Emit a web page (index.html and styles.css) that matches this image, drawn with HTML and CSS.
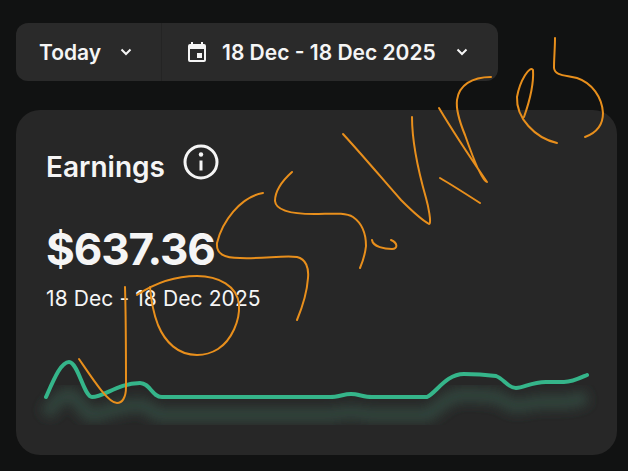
FILE: index.html
```html
<!DOCTYPE html>
<html lang="en">
<head>
    <meta charset="UTF-8">
    <meta name="viewport" content="width=device-width, initial-scale=1.0">
    <title>Earnings</title>
    <link rel="stylesheet" href="styles.css">
</head>
<body>
    <div class="toolbar">
        <button class="tool tool-range">
            <span>Today</span>
            <svg class="chev" viewBox="0 0 12 8"><path d="M1.5 1.5 6 6l4.5-4.5"/></svg>
        </button>
        <button class="tool tool-date">
            <svg class="cal" viewBox="0 0 24 24"><path d="M19 4h-1V2h-2v2H8V2H6v2H5a2 2 0 0 0-2 2v14a2 2 0 0 0 2 2h14a2 2 0 0 0 2-2V6a2 2 0 0 0-2-2zm0 16H5V9h14v11zm-7-7h5v5h-5z"/></svg>
            <span>18 Dec - 18 Dec 2025</span>
            <svg class="chev" viewBox="0 0 12 8"><path d="M1.5 1.5 6 6l4.5-4.5"/></svg>
        </button>
    </div>

    <section class="card">
        <div class="card-head">
            <h2>Earnings</h2>
            <svg class="info" viewBox="0 0 36 36">
                <circle cx="18" cy="18" r="16"/>
                <path d="M18 16.5v10"/>
                <circle class="dot" cx="18" cy="10.5" r="2.2"/>
            </svg>
        </div>
        <div class="amount">$637.36</div>
        <div class="period">18 Dec - 18 Dec 2025</div>
        <svg class="chart" viewBox="0 0 601 80">
            <defs>
                <filter id="soft" x="-5%" y="-50%" width="110%" height="200%"><feGaussianBlur stdDeviation="6"/></filter>
            </defs>
            <path class="glow" filter="url(#soft)" d="M30 50C38 38 45 30 53 30C62 30 68 50 76 50C88 50 102 40 124 40C134 40 136 50 146 50H314C322 50 328 47 335 47C342 47 348 50 356 50H411C420 46 430 30 448 30C460 30 472 31 480 32C488 34 492 41 500 41C508 41 515 37 530 37H548C556 37 562 35 571 32"/>
            <path class="line" d="M30 50C38 32 45 15 53 15C62 15 68 50 76 50C88 50 102 36 124 36C134 36 136 50 146 50H314C322 50 328 47 335 47C342 47 348 50 356 50H411C420 46 430 27 448 27C460 27 472 28 480 29C488 32 492 41 500 41C508 41 515 35 530 35H548C556 35 562 32 571 28"/>
        </svg>
    </section>

    <!-- hand scribble over the screenshot -->
    <svg class="scribble" viewBox="0 0 628 471">
        <path d="M125 287C126 320 126 360 126 387C126 398 122 403 117 403C108 403 92 378 79 359"/>
        <path d="M137 295C155 283 175 276 197 276C218 276 238 286 239 305C240 320 232 340 218 349C210 354 203 355 197 355C178 355 165 342 158 325C153 312 151 300 150 287"/>
        <path d="M263 193C240 197 222 222 217 243C216 254 224 258 240 258C262 259 285 255 297 257C306 259 309 268 308 278C307 292 302 308 297 320"/>
        <path d="M292 172C282 181 275 190 275 201C276 212 295 214 314 214C330 214 345 212 353 217C363 224 366 236 366 246C365 255 363 261 360 268"/>
        <path d="M372 240C373 247 385 249 392 249C398 249 398 243 391 240"/>
        <path d="M343 134C365 158 385 182 401 200C412 211 422 220 429 224C432 224 428 205 426 198C418 170 412 140 412 117"/>
        <path d="M440 178C452 185 466 194 480 203"/>
        <path d="M439 108C455 135 472 160 487 182C482 182 472 155 465 135C458 118 456 108 457 100C459 85 472 77 491 77"/>
        <path d="M524 117C530 100 534 85 533 70C530 65 520 80 517 97C516 118 535 138 557 143"/>
        <path d="M555 38C555 48 554 58 554 68C555 76 566 75 577 78C592 83 602 97 603 113C603 125 596 133 585 137"/>
    </svg>
</body>
</html>
```
FILE: styles.css
```css
body {
    margin: 0;
    padding: 23px 11px 16px 16px;
    background-color: #111212;
    font-family: Inter, "Noto Sans", sans-serif;
    color: #f5f5f5;
}
.toolbar {
    display: flex;
    width: 482px;
    height: 58px;
    background-color: #2a2a2a;
    border-radius: 12px;
}
.tool {
    display: flex;
    align-items: center;
    height: 100%;
    padding: 0;
    background: none;
    border: none;
    color: inherit;
    font: inherit;
    font-size: 21px;
    font-weight: 600;
}
.tool-range {
    width: 146px;
    padding-left: 23px;
    gap: 19px;
    border-right: 1px solid #242424;
    box-sizing: border-box;
}
.tool-date {
    padding-left: 23px;
    gap: 14px;
}
.chev {
    width: 12px;
    height: 8px;
    fill: none;
    stroke: #f5f5f5;
    stroke-width: 2;
}
.tool-date .chev {
    margin-left: 6px;
}
.cal {
    width: 24px;
    height: 24px;
    fill: #f5f5f5;
    margin-right: -1px;
}
.card {
    margin-top: 29px;
    height: 345px;
    background-color: #272727;
    border-radius: 24px;
    box-sizing: border-box;
    padding-top: 34px;
}
.card-head {
    display: flex;
    align-items: flex-start;
    gap: 18px;
    padding-left: 30px;
    height: 46px;
}
.card-head h2 {
    margin: 5px 0 0;
    font-size: 28px;
    font-weight: 600;
    line-height: 36px;
}
.info {
    width: 36px;
    height: 36px;
    fill: none;
    stroke: #f5f5f5;
    stroke-width: 3;
}
.info .dot {
    fill: #f5f5f5;
    stroke: none;
}
.amount {
    margin-top: 33px;
    padding-left: 30px;
    font-size: 44px;
    font-weight: 700;
    letter-spacing: -1.1px;
    line-height: 52px;
}
.period {
    margin-top: 10px;
    padding-left: 30px;
    font-size: 21px;
    letter-spacing: 0.1px;
    line-height: 28px;
}
.chart {
    display: block;
    width: 601px;
    height: 80px;
    margin-top: 34px;
    overflow: visible;
}
.chart .line {
    fill: none;
    stroke: #35b58a;
    stroke-width: 4;
    stroke-linecap: round;
}
.chart .glow {
    fill: none;
    stroke: #33453e;
    stroke-width: 14;
    transform: translateY(18px);
}
.scribble {
    position: absolute;
    left: 0;
    top: 0;
    width: 628px;
    height: 471px;
    fill: none;
    stroke: #e88f1c;
    stroke-width: 2;
    stroke-linecap: round;
    stroke-linejoin: round;
}
```
